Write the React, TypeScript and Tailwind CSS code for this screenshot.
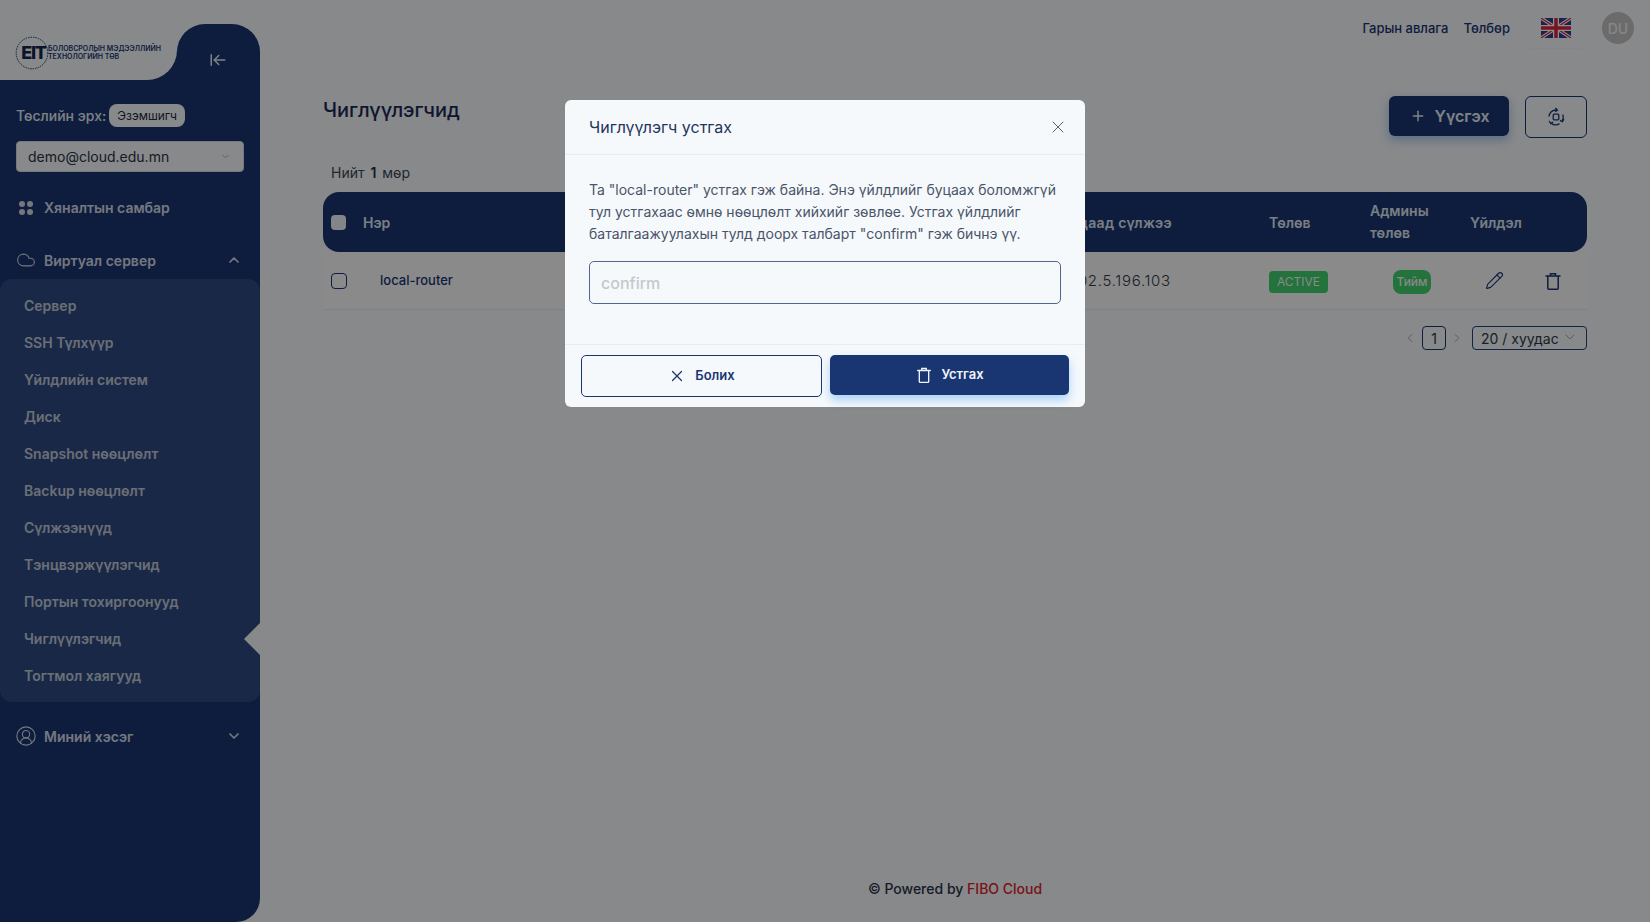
import { ArrowLeftToLine, ChevronDown, ChevronLeft, ChevronRight, ChevronUp, CircleUserRound, Cloud, Pencil, Plus, X } from "lucide-react";

const subItems = [
  "Сервер",
  "SSH Түлхүүр",
  "Үйлдлийн систем",
  "Диск",
  "Snapshot нөөцлөлт",
  "Backup нөөцлөлт",
  "Сүлжээнүүд",
  "Тэнцвэржүүлэгчид",
  "Портын тохиргоонууд",
  "Чиглүүлэгчид",
  "Тогтмол хаягууд",
];

function TrashIcon({ className }: { className?: string }) {
  return (
    <svg viewBox="0 0 20 20" fill="none" stroke="currentColor" strokeWidth="1.5" className={className}>
      <path d="M3 5h14" strokeLinecap="round" />
      <path d="M7.5 5V2.8h5V5" />
      <path d="M4.8 5v12.2a1 1 0 0 0 1 1h8.4a1 1 0 0 0 1-1V5" />
    </svg>
  );
}

function RefreshIcon() {
  return (
    <svg viewBox="0 0 20 20" fill="none" stroke="currentColor" strokeWidth="1.3" className="h-5 w-5">
      <rect x="7.2" y="7.2" width="5.6" height="5.6" rx="1" />
      <path d="M3 9.5a7 7 0 0 1 6.5-6.5l1.6.2" />
      <path d="M9.4 1l2 2.2-2.2 1.6" />
      <path d="M16.8 7.5a7 7 0 0 1-.6 6" />
      <path d="M17.9 12.2l-1.5 2.4-2.4-1.2" />
      <path d="M13.5 16.6a7 7 0 0 1-8.3-.4" />
      <path d="M3.2 14l1.6 2.5 2.3-1.4" />
    </svg>
  );
}

function UkFlag() {
  return (
    <svg viewBox="0 0 60 40" className="h-[20px] w-[30px]">
      <rect width="60" height="40" fill="#2e3f8f" />
      <path d="M0 0L60 40M60 0L0 40" stroke="#fff" strokeWidth="7" />
      <path d="M0 0L60 40M60 0L0 40" stroke="#d8263c" strokeWidth="2.5" />
      <path d="M30 0V40M0 20H60" stroke="#fff" strokeWidth="12" />
      <path d="M30 0V40M0 20H60" stroke="#d8263c" strokeWidth="7" />
    </svg>
  );
}

function Logo() {
  return (
    <div className="flex h-full items-center pl-[15px] pt-[26px]">
      <div className="relative flex h-[34px] w-[34px] items-center justify-center">
        <svg viewBox="0 0 34 34" fill="none" className="absolute inset-0 h-full w-full">
          <circle cx="17" cy="17" r="15.8" stroke="#1a3672" strokeWidth="1" strokeDasharray="1.5 1" />
        </svg>
        <span className="relative ml-[3px] text-[18px] leading-none font-extrabold tracking-[-1.2px] text-[#16264f]">EIT</span>
      </div>
      <div className="ml-[-1px] text-[7px] leading-[8.5px] font-semibold whitespace-nowrap text-[#1a3672]">
        <div>БОЛОВСРОЛЫН МЭДЭЭЛЛИЙН</div>
        <div>ТЕХНОЛОГИЙН ТӨВ</div>
      </div>
    </div>
  );
}

function Sidebar() {
  return (
    <aside className="relative flex h-[922px] w-[260px] shrink-0 flex-col">
      <div className="flex h-[80px] shrink-0">
        <div className="w-[177px] bg-[#1a3672]">
          <div className="h-full rounded-br-[30px] bg-[#f6f9fc]">
            <Logo />
          </div>
        </div>
        <div className="mt-[24px] flex w-[83px] items-center justify-center rounded-t-[28px] bg-[#1a3672] text-[#e8edf5]">
          <ArrowLeftToLine size={18} strokeWidth={2} className="mt-[15px] mr-[2px]" />
        </div>
      </div>

      <div className="flex flex-1 flex-col rounded-br-[24px] bg-[#1a3672]">
        <div className="mt-[24px] flex h-[23px] items-center px-[16px] text-[14px] font-medium text-[#e6ecf5]">
          <span>Төслийн эрх:</span>
          <span className="ml-[3px] flex h-[23px] items-center rounded-[8px] bg-[#f6f9fc] px-[8px] text-[12px] font-normal text-[#1f2a44]">
            Эзэмшигч
          </span>
        </div>
        <div className="mx-[16px] mt-[14px] flex h-[31px] items-center justify-between rounded-[4px] border border-[#d5dbe5] bg-[#f6f9fc] pr-[12px] pl-[11px] text-[14px] text-[#2a3346]">
          <span>demo@cloud.edu.mn</span>
          <ChevronDown size={11} className="text-[#a5acb8]" />
        </div>

        <div className="mt-[17px] flex h-[37px] items-center pl-[19px] text-[14px] font-semibold text-[#d4dbe6]">
          <div className="grid h-[14px] w-[14px] grid-cols-2 gap-[2px]">
            <span className="rounded-[3px] bg-[#d4dbe6]" />
            <span className="rounded-[3px] bg-[#d4dbe6]" />
            <span className="rounded-[3px] bg-[#d4dbe6]" />
            <span className="rounded-[3px] bg-[#d4dbe6]" />
          </div>
          <span className="ml-[11px]">Хяналтын самбар</span>
        </div>

        <div className="mt-[17px] flex h-[36px] items-center pr-[18px] pb-[2px] pl-[16px] text-[14px] font-semibold text-[#d4dbe6]">
          <Cloud size={20} strokeWidth={1.3} />
          <span className="ml-[8px] flex-1">Виртуал сервер</span>
          <ChevronUp size={16} strokeWidth={2.6} />
        </div>

        <div className="relative rounded-[12px] bg-[#2f4a81] py-[8px]">
          {subItems.map((item) => (
            <div key={item} className="flex h-[37px] items-center pl-[24px] text-[14px] font-semibold text-[#c2cad8]">
              {item}
            </div>
          ))}
          <span className="absolute top-[344px] right-0 h-0 w-0 border-y-[16px] border-r-[16px] border-y-transparent border-r-[#f6f9fc]" />
        </div>

        <div className="mt-[16px] flex h-[36px] items-center pr-[18px] pl-[15px] text-[14px] font-semibold text-[#d4dbe6]">
          <CircleUserRound size={22} strokeWidth={1.2} />
          <span className="ml-[7px] flex-1">Миний хэсэг</span>
          <ChevronDown size={16} strokeWidth={2.6} />
        </div>
      </div>
    </aside>
  );
}

function Table() {
  return (
    <div>
      <div className="grid h-[60px] grid-cols-[40px_1fr_206px_101px_100px_117px] items-center rounded-[16px] bg-[#1a3672] text-[14px] font-semibold text-[#dfe5ee]">
        <span className="ml-[8px] h-[15px] w-[15px] rounded-[4px] bg-[#f0f3f7]" />
        <span>Нэр</span>
        <span className="tracking-[0.3px]">Гадаад сүлжээ</span>
        <span>Төлөв</span>
        <span className="leading-[22px]">
          Админы
          <br />
          төлөв
        </span>
        <span>Үйлдэл</span>
      </div>
      <div className="grid h-[58px] grid-cols-[40px_1fr_206px_101px_100px_117px] items-center border-b border-[#e8ebf0] bg-[#fbfcfd]">
        <span className="ml-[8px] h-[16px] w-[16px] rounded-[4px] border border-[#1a3672]" />
        <span className="pl-[17px] text-[13px] font-medium text-[#1a3672]">local-router</span>
        <span className="pt-[1px] pl-[5px] text-[15px] font-light tracking-[0.7px] text-[#333a47]">202.5.196.103</span>
        <span>
          <span className="inline-flex h-[22px] w-[59px] items-center justify-center rounded-[4px] bg-[#42cf6d] text-[12px] text-[#f2fbf5]">
            ACTIVE
          </span>
        </span>
        <span className="pl-[23px]">
          <span className="inline-flex h-[24px] w-[38px] items-center justify-center rounded-[8px] bg-[#42cf6d] text-[12px] font-medium text-[#f2fbf5]">
            Тийм
          </span>
        </span>
        <span className="flex items-center pl-[15px] text-[#1a3672]">
          <Pencil size={19} strokeWidth={1.4} />
          <TrashIcon className="ml-[39px] h-[20px] w-[20px]" />
        </span>
      </div>
    </div>
  );
}

function Main() {
  return (
    <main className="flex h-[922px] min-w-0 flex-1 flex-col">
      <header className="flex h-[56px] shrink-0 items-center justify-end pr-[16px] text-[13px] font-medium text-[#1a3672]">
        <span className="mt-[2px]">Гарын авлага</span>
        <span className="mt-[2px] ml-[15px]">Төлбөр</span>
        <div className="mt-[-8px] ml-[15px] flex h-[48px] w-[62px] items-center justify-center rounded-b-[8px] pt-[8px] shadow-[0_1px_2px_rgba(0,0,0,0.03)]">
          <UkFlag />
        </div>
        <div className="ml-[15px] flex h-[32px] w-[32px] items-center justify-center rounded-full bg-[#c4c4c4] text-[14px] text-[#f5f5f5]">
          DU
        </div>
      </header>

      <div className="flex flex-1 flex-col px-[63px] pt-[40px]">
        <div className="flex h-[42px] items-start justify-between">
          <h1 className="text-[20px] leading-[28px] font-medium text-[#1a2a55]">Чиглүүлэгчид</h1>
          <div className="flex">
            <button className="flex h-[40px] w-[120px] items-center justify-center rounded-[6px] bg-[#1a3672] pl-[2px] text-[16px] font-semibold text-[#e8edf5] shadow-[0_4px_10px_rgba(66,133,220,0.45)]">
              <Plus size={16} strokeWidth={2.2} />
              <span className="ml-[8px]">Үүсгэх</span>
            </button>
            <button className="ml-[16px] flex h-[42px] w-[62px] items-center justify-center rounded-[6px] border border-[#1a3672] text-[#1a3672]">
              <RefreshIcon />
            </button>
          </div>
        </div>

        <div className="mt-[25px] h-[20px] pl-[8px] text-[14px] leading-[20px] text-[#3d4657]">
          Нийт <span className="mx-[2px] font-semibold text-[#1f2a44]">1</span> мөр
        </div>

        <div className="mt-[9px]">
          <Table />
        </div>

        <div className="mt-[16px] flex h-[24px] items-center justify-end text-[14px] text-[#2f3848]">
          <ChevronLeft size={14} strokeWidth={1.3} className="text-[#8d94a0]" />
          <span className="ml-[5px] flex h-[24px] w-[24px] items-center justify-center rounded-[4px] border border-[#1a3672]">1</span>
          <ChevronRight size={14} strokeWidth={1.3} className="ml-[4px] text-[#8d94a0]" />
          <span className="ml-[8px] flex h-[24px] w-[115px] items-center justify-between rounded-[4px] border border-[#26407a] pr-[8px] pl-[8px]">
            20 / хуудас
            <ChevronDown size={16} strokeWidth={1.1} className="mt-[-3px] text-[#7f8795]" />
          </span>
        </div>

        <footer className="mt-auto mb-[23px] text-center text-[14px] leading-[20px] font-medium text-[#2a3346]">
          © Powered by <span className="text-[#e0232e]">FIBO Cloud</span>
        </footer>
      </div>
    </main>
  );
}

function DeleteModal() {
  return (
    <div className="absolute inset-0 flex justify-center bg-black/45 pt-[100px]">
      <div className="h-[307px] w-[520px] rounded-[6px] bg-[#f6f9fc]">
        <div className="flex h-[55px] items-center justify-between border-b border-[#e9edf2] pr-[17px] pl-[24px]">
          <span className="text-[16px] font-normal text-[#22345c]">Чиглүүлэгч устгах</span>
          <X size={20} strokeWidth={1.2} className="text-[#5b6475]" />
        </div>
        <div className="h-[190px] border-b border-[#e9edf2] px-[24px] pt-[24px]">
          <p className="w-[472px] text-[14px] leading-[22px] text-[#4a5468]">
            Та "local-router" устгах гэж байна. Энэ үйлдлийг буцаах боломжгүй тул устгахаас өмнө нөөцлөлт хийхийг зөвлөе. Устгах үйлдлийг баталгаажуулахын тулд доорх талбарт "confirm" гэж бичнэ үү.
          </p>
          <input
            readOnly
            placeholder="confirm"
            className="mt-[16px] h-[43px] w-[472px] rounded-[5px] border border-[#54668f] bg-transparent px-[11px] text-[16px] font-medium outline-none placeholder:text-[#c4c7cc]"
          />
        </div>
        <div className="flex items-start pt-[10px] pl-[16px]">
          <button className="flex h-[42px] w-[241px] items-center justify-center rounded-[5px] border border-[#1a3672] text-[13px] font-semibold text-[#1a3672]">
            <X size={18} strokeWidth={1.6} />
            <span className="ml-[9px]">Болих</span>
          </button>
          <button className="ml-[8px] flex h-[40px] w-[239px] items-center justify-center rounded-[5px] bg-[#1a3672] text-[13px] font-semibold text-[#f0f4fa] shadow-[0_5px_10px_rgba(90,170,245,0.5)]">
            <TrashIcon className="h-[18px] w-[18px]" />
            <span className="ml-[8px]">Устгах</span>
          </button>
        </div>
      </div>
    </div>
  );
}

export default function App() {
  return (
    <div className="relative flex h-[922px] w-[1650px] overflow-hidden bg-[#f6f9fc] font-['Inter',sans-serif]">
      <Sidebar />
      <Main />
      <DeleteModal />
    </div>
  );
}
